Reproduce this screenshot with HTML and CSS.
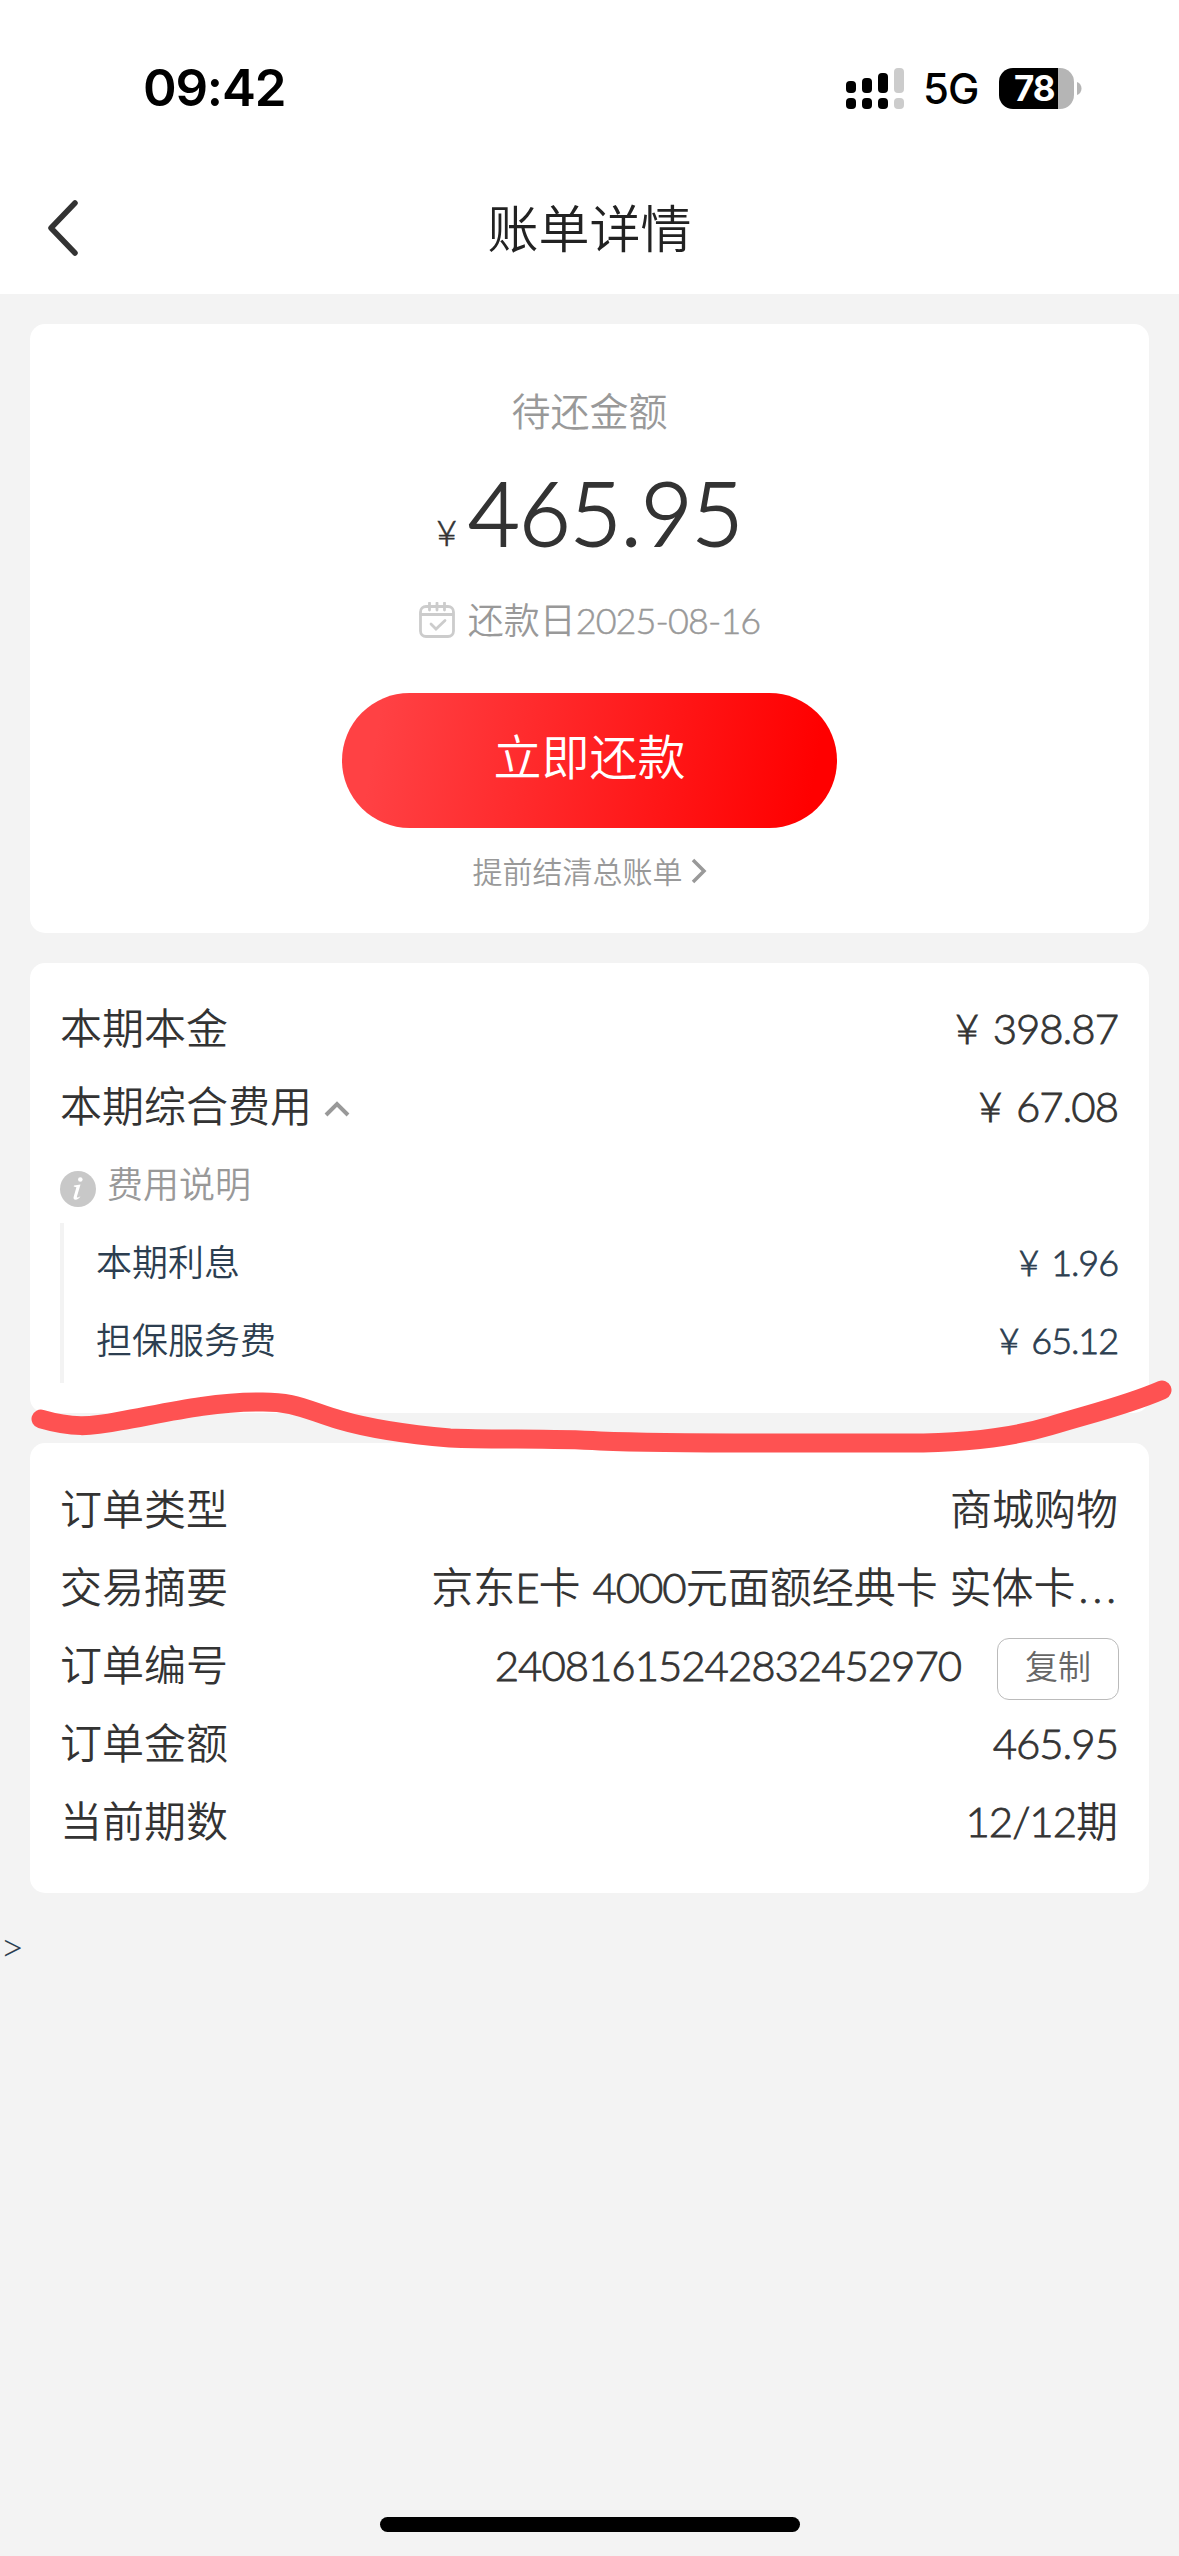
FILE: index.html
```html
<!DOCTYPE html>
<html lang="zh-CN">
<head>
<meta charset="utf-8">
<title>账单详情</title>
<link rel="stylesheet" href="styles.css">
</head>
<body>
<div class="screen">
  <header class="top">
    <div class="status">
      <span class="clock">09:42</span>
      <div class="indicators">
        <svg class="signal" width="58" height="41" viewBox="0 0 58 41">
          <rect x="0" y="13" width="10" height="12" rx="4"/>
          <rect x="16" y="10" width="10" height="15" rx="4"/>
          <rect x="32" y="5" width="10" height="20" rx="4"/>
          <rect class="dim" x="48" y="0" width="10" height="25" rx="4"/>
          <rect x="0" y="30" width="10" height="11" rx="4"/>
          <rect x="16" y="30" width="10" height="11" rx="4"/>
          <rect x="32" y="30" width="10" height="11" rx="4"/>
          <rect class="dim" x="48" y="30" width="10" height="11" rx="4"/>
        </svg>
        <span class="network">5G</span>
        <div class="battery"><span class="level">78</span></div>
        <svg class="nub" width="5" height="13" viewBox="0 0 5 13"><path d="M0 0C6 2 6 11 0 13Z"/></svg>
      </div>
    </div>
    <nav class="nav">
      <svg class="back" width="36" height="60" viewBox="0 0 36 60"><path d="M30 4L6 29L30 54"/></svg>
      <h1 class="title">账单详情</h1>
    </nav>
  </header>

  <main class="content">
    <section class="card summary">
      <div class="label">待还金额</div>
      <div class="amount"><span class="yen">¥</span><span class="figure">465.95</span></div>
      <div class="due">
        <svg class="calendar" width="36" height="36" viewBox="0 0 36 36">
          <rect x="1.5" y="4.5" width="33" height="30" rx="5.5"/>
          <path d="M2 12.500H34M10.500 1V8M18 1V8M25.500 1V8"/>
          <path d="M12 22L17 27L26 18.500"/>
        </svg>
        <span>还款日<span class="num">2025-08-16</span></span>
      </div>
      <button class="pay">立即还款</button>
      <div class="settle"><span>提前结清总账单</span><svg width="16" height="26" viewBox="0 0 16 26"><path d="M2 2L13 13L2 24"/></svg></div>
    </section>

    <section class="card rows fee-card">
      <div class="row"><span>本期本金</span><span class="num">¥ 398.87</span></div>
      <div class="row">
        <span class="fees">本期综合费用<svg width="26" height="16" viewBox="0 0 26 16"><path d="M2 14L13 3L24 14"/></svg></span>
        <span class="num">¥ 67.08</span>
      </div>
      <div class="row hint">
        <svg class="info" width="36" height="36" viewBox="0 0 36 36">
          <circle cx="18" cy="18" r="18"/>
          <path d="M14 14.500L20.500 13.500L16.800 26Q16.800 27.500 20.500 25.300Q18.500 28.700 15.500 28.700Q12.900 28.500 13.700 25.800L16.400 16.200L13.700 15.600Z"/>
          <ellipse cx="20.300" cy="8.500" rx="2.300" ry="2.200"/>
        </svg>
        <span>费用说明</span>
      </div>
      <div class="breakdown">
        <div class="row"><span>本期利息</span><span class="num">¥ 1.96</span></div>
        <div class="row"><span>担保服务费</span><span class="num">¥ 65.12</span></div>
      </div>
    </section>

    <section class="card rows">
      <div class="row"><span>订单类型</span><span>商城购物</span></div>
      <div class="row"><span>交易摘要</span><span class="digest">京东<span class="num">E</span>卡 <span class="num">4000</span>元面额经典卡 实体卡<span class="num more">...</span></span></div>
      <div class="row"><span>订单编号</span><span class="number"><span class="num">24081615242832452970</span><button class="copy">复制</button></span></div>
      <div class="row"><span>订单金额</span><span class="num">465.95</span></div>
      <div class="row"><span>当前期数</span><span><span class="num">12/12</span>期</span></div>
    </section>
  </main>
  <div class="stray">&gt;</div>
  <div class="home"></div>
  <svg class="stroke" width="1179" height="90" viewBox="0 1375 1179 90">
    <path d="M41 1419C72 1428 90 1427 120 1421C165 1413 210 1402 258 1402C296 1401 308 1411 340 1420C374 1430 415 1435 450 1438C500 1440 550 1438 600 1441C650 1443 700 1443 760 1443H908C965 1443 1010 1438 1050 1426C1092 1413 1125 1406 1162 1390"/>
  </svg>
</div>
</body>
</html>
```
FILE: styles.css
```css
* {
  box-sizing: border-box;
}

body {
  margin: 0;
  background: #f3f3f3;
  color: #333;
  font-family: "Lato Light", Lato, "Noto Sans CJK SC DemiLight", "Noto Sans CJK SC", sans-serif;
  font-size: 42px;
  font-weight: 300;
}

button {
  font-family: inherit;
  font-weight: inherit;
  padding: 0;
}

svg {
  display: block;
  flex: none;
  fill: none;
}

.screen {
  position: relative;
  width: 1179px;
  height: 2556px;
  display: flex;
  flex-direction: column;
  overflow: hidden;
}

.top {
  height: 294px;
  background: #fff;
  color: #000;
}

.status {
  height: 164px;
  padding: 12px 97px 0 143px;
  display: flex;
  align-items: center;
  justify-content: space-between;
  font-family: Inter, sans-serif;
}

.clock {
  font-size: 51px;
  font-weight: 600;
  line-height: 60px;
  letter-spacing: -1.2px;
}

.indicators {
  display: flex;
  align-items: center;
}

.signal {
  fill: #000;
}

.signal .dim {
  fill: #ccc;
}

.network {
  width: 56px;
  margin: 2px 20px 0 19px;
  font-size: 42px;
  font-weight: 500;
  line-height: 42px;
  letter-spacing: -1px;
}

.battery {
  width: 75px;
  height: 41px;
  border-radius: 14px;
  background: linear-gradient(90deg, #000 59px, #b5b5b5 59px);
  color: #fff;
  padding-left: 15px;
  line-height: 41px;
}

.level {
  font-size: 35px;
  font-weight: 700;
  letter-spacing: -1px;
  display: block;
}

.nub {
  margin-left: 3px;
  fill: #b5b5b5;
}

.nav {
  height: 130px;
  display: grid;
  grid-template-columns: 134px 1fr 134px;
  align-items: center;
}

.back {
  margin-left: 45px;
  stroke: #333;
  stroke-width: 5.5;
  stroke-linecap: round;
  stroke-linejoin: round;
}

.title {
  margin: 0;
  text-align: center;
  font-size: 51px;
  font-weight: 400;
  line-height: 70px;
  color: #222;
}

.content {
  padding: 30px 30px 0;
  display: flex;
  flex-direction: column;
  gap: 30px;
}

.card {
  background: #fff;
  border-radius: 15px;
}

.summary {
  height: 609px;
  padding-top: 57px;
  display: flex;
  flex-direction: column;
  align-items: center;
  color: #999;
}

.label {
  font-size: 39px;
  line-height: 60px;
}

.num {
  letter-spacing: -1.05px;
  word-spacing: 4px;
  -webkit-text-stroke: 0.8px currentColor;
}

.amount {
  height: 120px;
  margin-top: 11px;
  display: flex;
  align-items: baseline;
  color: #333;
  line-height: 120px;
}

.yen {
  font-size: 36px;
  margin-right: 11px;
  -webkit-text-stroke: 0.6px currentColor;
}

.figure {
  font-size: 89px;
  letter-spacing: -0.7px;
  -webkit-text-stroke: 1.8px currentColor;
}

.due {
  margin-top: 21px;
  display: flex;
  align-items: center;
  gap: 13px;
  font-size: 36px;
  line-height: 54px;
}

.due .num {
  letter-spacing: -0.9px;
  -webkit-text-stroke-width: 0.5px;
}

.calendar {
  stroke: #ccc;
  stroke-width: 2.8;
  stroke-linecap: round;
}

.pay {
  width: 495px;
  height: 135px;
  margin-top: 46px;
  padding-bottom: 14px;
  border: 0;
  border-radius: 68px;
  background: linear-gradient(100deg, #ff4144 8%, #ff0000 94%);
  color: #fff;
  font-size: 48px;
}

.settle {
  margin-top: 20px;
  display: flex;
  align-items: center;
  gap: 8px;
  font-size: 30px;
  line-height: 46px;
}

.settle svg {
  stroke: #999;
  stroke-width: 3.5;
}

.rows {
  height: 450px;
  padding: 27px 31px 0 30px;
}

.fee-card {
  padding-top: 26px;
}

.row {
  height: 78px;
  display: flex;
  align-items: center;
  justify-content: space-between;
  line-height: 78px;
  white-space: nowrap;
}

.digest {
  word-spacing: 0.5px;
}

.digest .more {
  letter-spacing: 4px;
  margin: 0 -2px 0 3px;
}

.fees {
  display: flex;
  align-items: center;
  gap: 12px;
}

.fees svg {
  margin-top: 6px;
  stroke: #999;
  stroke-width: 4;
}

.hint {
  justify-content: flex-start;
  gap: 11px;
  color: #999;
  font-size: 36px;
}

.info {
  margin-top: 9px;
  fill: #fff;
}

.info circle {
  fill: #c8c8c8;
}

.breakdown {
  height: 160px;
  border-left: 4px solid #f3f3f3;
  padding-left: 32px;
  font-size: 36px;
  color: #2c3e50;
}

.number {
  display: flex;
  align-items: center;
}

.copy {
  width: 122px;
  height: 62px;
  margin: 8px -1px 0 36px;
  padding-bottom: 6px;
  border: 1px solid #bbb;
  border-radius: 12px;
  background: #fff;
  color: #666;
  font-size: 33px;
  line-height: 48px;
}

.stray {
  margin-top: 29px;
  font-size: 42px;
  line-height: 48px;
  color: #2c3e50;
}

.home {
  width: 420px;
  height: 15px;
  margin: auto auto 24px;
  border-radius: 8px;
  background: #000;
}

.stroke {
  position: absolute;
  left: 0;
  top: 1375px;
  stroke: #fe5252;
  stroke-width: 19;
  stroke-linecap: round;
  stroke-linejoin: round;
}
```
